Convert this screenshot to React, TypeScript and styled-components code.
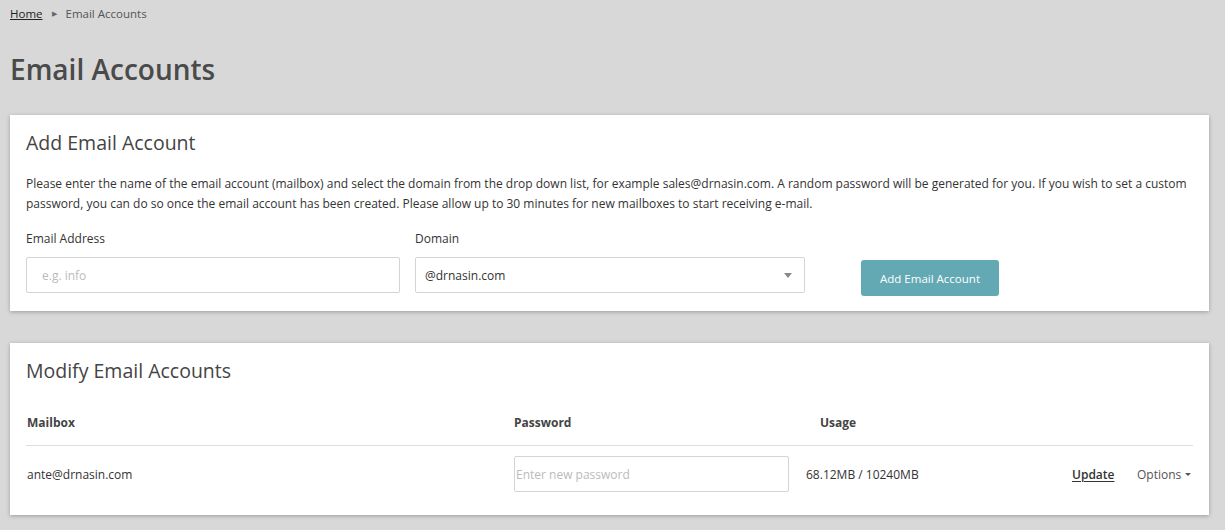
import React from "react";
import styled, { createGlobalStyle } from "styled-components";

const Global = createGlobalStyle`
  html, body { margin: 0; padding: 0; }
  body {
    background: #d8d8d8;
    font-family: "Open Sans", "Liberation Sans", sans-serif;
    color: #333;
  }
  * { box-sizing: border-box; }
`;

const Page = styled.div`
  padding: 5px 16px 16px 10px;
  min-height: 530px;
`;

const Breadcrumb = styled.nav`
  display: flex;
  align-items: center;
  gap: 9px;
  font-size: 11.5px;
  color: #555;
  height: 16px;
`;

const Crumb = styled.a`
  color: #222;
  text-decoration: underline;
`;

const Sep = styled.span`
  font-size: 7px;
  color: #666;
`;

const Title = styled.h1`
  margin: 30px 0 28px;
  font-size: 28px;
  font-weight: 600;
  color: #4a4a4a;
  line-height: 36px;
`;

const Card = styled.section<{ $mb?: number; $pb?: number }>`
  background: #fff;
  box-shadow: 0 1px 4px rgba(0, 0, 0, 0.28);
  padding: 16px 16px ${(p) => p.$pb ?? 18}px;
  margin-bottom: ${(p) => p.$mb ?? 0}px;
`;

const CardTitle = styled.h2`
  margin: 0;
  font-size: 19.5px;
  font-weight: 400;
  color: #444;
  line-height: 24px;
`;

const Para = styled.p`
  margin: 19px 0 17px;
  font-size: 12px;
  line-height: 20px;
  color: #333;
`;

const FormRow = styled.div`
  display: grid;
  grid-template-columns: 374px 390px auto;
  column-gap: 15px;
  align-items: end;
`;

const Field = styled.div`
  display: flex;
  flex-direction: column;
  gap: 10px;
`;

const Label = styled.label`
  font-size: 12px;
  color: #333;
  line-height: 16px;
`;

const Input = styled.input<{ $pl?: number }>`
  height: 36px;
  border: 1px solid #d4d4d4;
  border-radius: 2px;
  padding: 0 ${(p) => p.$pl ?? 15}px;
  font-family: inherit;
  font-size: 12px;
  color: #333;
  outline: none;
  width: 100%;
  &::placeholder { color: #bbb; }
`;

const Select = styled.div`
  height: 36px;
  border: 1px solid #d4d4d4;
  border-radius: 2px;
  padding: 0 12px 0 9px;
  display: flex;
  align-items: center;
  justify-content: space-between;
  font-size: 12px;
  color: #333;
`;

const Caret = styled.span`
  width: 0;
  height: 0;
  border-left: 4px solid transparent;
  border-right: 4px solid transparent;
  border-top: 5px solid #888;
`;

const Button = styled.button`
  margin-left: 41px;
  margin-bottom: -3px;
  width: 138px;
  height: 36px;
  background: #63a9b4;
  color: #fff;
  border: none;
  border-radius: 3px;
  font-family: inherit;
  font-size: 11.5px;
`;

const Table = styled.div`
  margin-top: 17px;
`;

const Row = styled.div<{ $head?: boolean }>`
  display: grid;
  grid-template-columns: 487px 292px 266px 65px auto;
  align-items: center;
  height: ${(p) => (p.$head ? 46 : 56)}px;
  padding-left: 1px;
  border-bottom: ${(p) => (p.$head ? "1px solid #ddd" : "none")};
  font-size: 12px;
  font-weight: ${(p) => (p.$head ? 700 : 400)};
  color: ${(p) => (p.$head ? "#444" : "#333")};
`;

const UsageHead = styled.span`
  padding-left: 14px;
`;

const PwInput = styled(Input)`
  width: 275px;
  height: 36px;
`;

const Usage = styled.span`
  padding-left: 0;
`;

const Update = styled.a`
  font-weight: 600;
  color: #333;
  text-decoration: underline;
  text-underline-offset: 2px;
`;

const Options = styled.span`
  display: flex;
  align-items: center;
  gap: 4px;
  color: #555;
`;

const SmallCaret = styled.span`
  width: 0;
  height: 0;
  border-left: 3px solid transparent;
  border-right: 3px solid transparent;
  border-top: 3px solid #555;
`;

export default function App() {
  return (
    <>
      <Global />
      <Page>
        <Breadcrumb>
          <Crumb>Home</Crumb>
          <Sep>▶</Sep>
          <span>Email Accounts</span>
        </Breadcrumb>
        <Title>Email Accounts</Title>
        <Card $mb={32} $pb={18}>
          <CardTitle>Add Email Account</CardTitle>
          <Para>
            Please enter the name of the email account (mailbox) and select the domain from the drop down list, for
            example sales@drnasin.com. A random password will be generated for you. If you wish to set a custom
            password, you can do so once the email account has been created. Please allow up to 30 minutes for new
            mailboxes to start receiving e-mail.
          </Para>
          <FormRow>
            <Field>
              <Label>Email Address</Label>
              <Input placeholder="e.g. info" />
            </Field>
            <Field>
              <Label>Domain</Label>
              <Select>
                <span>@drnasin.com</span>
                <Caret />
              </Select>
            </Field>
            <Button>Add Email Account</Button>
          </FormRow>
        </Card>
        <Card $pb={13}>
          <CardTitle>Modify Email Accounts</CardTitle>
          <Table>
            <Row $head>
              <span>Mailbox</span>
              <span>Password</span>
              <UsageHead>Usage</UsageHead>
              <span />
              <span />
            </Row>
            <Row>
              <span>ante@drnasin.com</span>
              <PwInput $pl={1} placeholder="Enter new password" />
              <Usage>68.12MB / 10240MB</Usage>
              <Update>Update</Update>
              <Options>
                Options <SmallCaret />
              </Options>
            </Row>
          </Table>
        </Card>
      </Page>
    </>
  );
}
